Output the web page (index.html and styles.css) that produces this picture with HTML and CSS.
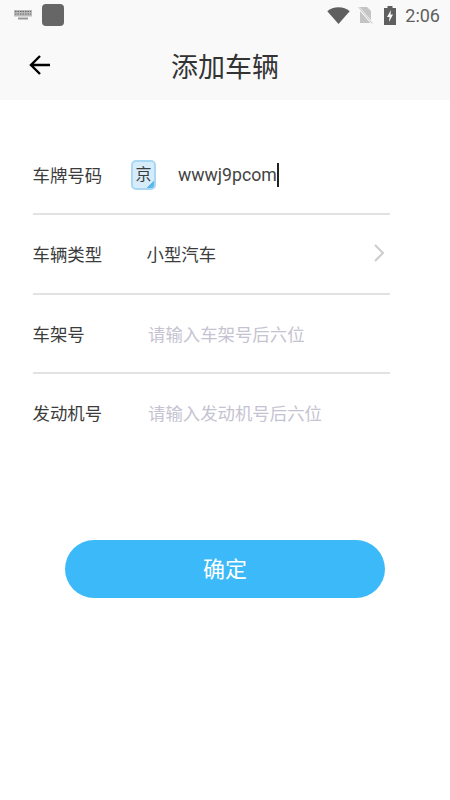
FILE: index.html
```html
<!DOCTYPE html>
<html lang="zh-CN">

<head>
    <meta charset="UTF-8">
    <meta name="viewport" content="width=device-width, initial-scale=1.0">
    <title>添加车辆</title>
    <link rel="stylesheet" href="styles.css">
</head>

<body>
    <div class="header">
        <div class="status-bar">
            <svg class="keyboard-icon" width="18" height="10" viewBox="0 0 18 10">
                <rect x="0" y="0" width="18" height="6.5" fill="#bbb"/>
                <path d="M1 1.5h16M1 4h16" stroke="#666" stroke-width="1" stroke-dasharray="1.5 1"/>
                <rect x="4" y="7.5" width="10" height="2" fill="#999"/>
            </svg>
            <div class="app-icon"></div>
            <div class="status-right">
                <svg width="23" height="17" viewBox="0 0 23 17">
                    <path d="M0.3 4.2C3.3 1.6 7.1 0.3 11.5 0.3s8.2 1.3 11.2 3.9L11.5 17z" fill="#5f5f5f"/>
                </svg>
                <svg class="sim-icon" width="15" height="18" viewBox="0 0 15 18">
                    <path d="M2 1h7l4 4v12H2z" fill="#c4c4c4"/>
                    <path d="M0.5 1.5L14 17" stroke="#f9f9f9" stroke-width="2.4"/>
                    <path d="M0.5 1L14.5 17.5" stroke="#c4c4c4" stroke-width="1"/>
                </svg>
                <svg class="battery-icon" width="12" height="19" viewBox="0 0 12 19">
                    <path d="M3.5 0h5v2H12v17H0V2h3.5z" fill="#5f5f5f"/>
                    <path d="M7 4L3 11h2.5L5 16l4-7.5H6.5z" fill="#f9f9f9"/>
                </svg>
                <span class="clock">2:06</span>
            </div>
        </div>
        <div class="title-bar">
            <svg class="back-icon" width="24" height="24" viewBox="0 0 24 24">
                <path d="M22 12H3M12 3l-9 9 9 9" fill="none" stroke="#000" stroke-width="2.4"/>
            </svg>
            <h1 class="page-title">添加车辆</h1>
        </div>
    </div>

    <div class="form">
        <div class="form-row">
            <span class="row-label">车牌号码</span>
            <span class="plate-badge">京</span>
            <span class="plate-input">wwwj9pcom</span>
        </div>
        <div class="form-row">
            <span class="row-label">车辆类型</span>
            <span class="row-value">小型汽车</span>
            <svg class="chevron" width="12" height="20" viewBox="0 0 12 20">
                <path d="M2 2l8 8-8 8" fill="none" stroke="#ccc" stroke-width="2"/>
            </svg>
        </div>
        <div class="form-row">
            <span class="row-label">车架号</span>
            <span class="row-placeholder">请输入车架号后六位</span>
        </div>
        <div class="form-row no-border">
            <span class="row-label">发动机号</span>
            <span class="row-placeholder">请输入发动机号后六位</span>
        </div>
    </div>

    <button class="confirm-button">确定</button>
</body>
</html>
```

FILE: styles.css
```css
html, body {
    height: 100%;
    margin: 0;
    background-color: #fff;
    font-family: "Noto Sans CJK SC", Roboto, sans-serif;
}

.header {
    height: 100px;
    background-color: #f9f9f9;
}

.status-bar {
    display: flex;
    align-items: center;
    height: 30px;
    padding: 0 10px 0 14px;
}

.app-icon {
    width: 22px;
    height: 22px;
    margin-left: 10px;
    border-radius: 4px;
    background-color: #666;
}

.status-right {
    display: flex;
    align-items: center;
    margin-left: auto;
}

.sim-icon {
    margin-left: 8px;
}

.battery-icon {
    margin-left: 11px;
}

.clock {
    margin-left: 9px;
    font-family: Roboto, sans-serif;
    font-size: 18px;
    color: #5f5f5f;
}

.title-bar {
    display: flex;
    align-items: center;
    height: 70px;
    padding-left: 28px;
}

.page-title {
    margin: 0 0 0 119px;
    font-size: 27px;
    font-weight: 400;
    color: #333;
}

.form {
    margin: 36px 60px 0 33px;
}

.form-row {
    display: flex;
    align-items: center;
    height: 77.3px;
    border-bottom: 2px solid #e2e2e2;
    font-size: 17.4px;
    color: #3c3c3c;
}

.form-row.no-border {
    border-bottom: none;
}

.row-label {
    width: 114px;
    margin-left: -0.5px;
}

.plate-badge {
    display: flex;
    align-items: center;
    justify-content: center;
    width: 25px;
    height: 30px;
    margin-left: -15.5px;
    padding-bottom: 3px;
    border: 2px solid #a9d8f5;
    border-radius: 5px;
    box-sizing: border-box;
    background: linear-gradient(135deg, #d6ecfa 85%, #5cb8ee 85%);
    font-size: 16px;
    line-height: 1;
}

.plate-input {
    margin-left: 22px;
    border-right: 2px solid #222;
    font-family: Roboto, sans-serif;
    font-size: 17.7px;
    line-height: 24px;
    color: #444;
}

.row-value {
    flex-grow: 1;
}

.row-placeholder {
    margin-left: 1.5px;
    color: #c5c3d1;
}

.chevron {
    margin: 0 5px 1px 0;
}

.confirm-button {
    display: block;
    width: 320px;
    height: 57.5px;
    margin: 89px 0 0 65px;
    padding-bottom: 5px;
    border: none;
    border-radius: 29px;
    background-color: #3cb9f9;
    color: white;
    font-family: inherit;
    font-size: 22px;
}
```
